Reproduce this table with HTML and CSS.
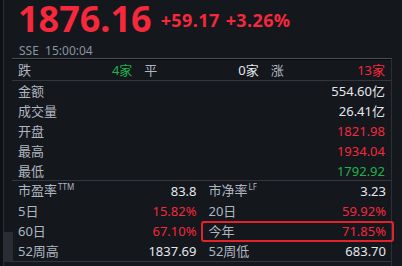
FILE: index.html
```html
<!DOCTYPE html>
<html lang="zh-CN">
<head>
<meta charset="utf-8">
<title>1876.16</title>
<link rel="stylesheet" href="styles.css">
</head>
<body>
<div class="app">
  <div class="gutter"><div class="tab"></div></div>
  <div class="main">
    <div class="header">
      <div class="quote">
        <span class="price">1876.16</span>
        <span class="chg">+59.17</span>
        <span class="chg pct">+3.26%</span>
      </div>
      <div class="meta">SSE&nbsp;&nbsp;15:00:04</div>
    </div>
    <div class="panel">
      <div class="breadth">
        <div class="cell"><span class="lbl">跌</span><span class="val down">4家</span></div>
        <div class="cell"><span class="lbl">平</span><span class="val">0家</span></div>
        <div class="cell"><span class="lbl">涨</span><span class="val up">13家</span></div>
      </div>
      <div class="list">
        <div class="row"><span class="lbl">金额</span><span class="val">554.60亿</span></div>
        <div class="row"><span class="lbl">成交量</span><span class="val">26.41亿</span></div>
        <div class="row"><span class="lbl">开盘</span><span class="val up">1821.98</span></div>
        <div class="row"><span class="lbl">最高</span><span class="val up">1934.04</span></div>
        <div class="row"><span class="lbl">最低</span><span class="val down">1792.92</span></div>
      </div>
      <div class="grid">
        <div class="row"><span class="lbl">市盈率<sup>TTM</sup></span><span class="val">83.8</span></div>
        <div class="row"><span class="lbl">市净率<sup>LF</sup></span><span class="val">3.23</span></div>
        <div class="row"><span class="lbl">5日</span><span class="val up">15.82%</span></div>
        <div class="row"><span class="lbl">20日</span><span class="val up">59.92%</span></div>
        <div class="row"><span class="lbl">60日</span><span class="val up">67.10%</span></div>
        <div class="row hl"><span class="lbl">今年</span><span class="val up">71.85%</span></div>
        <div class="row"><span class="lbl">52周高</span><span class="val">1837.69</span></div>
        <div class="row"><span class="lbl">52周低</span><span class="val">683.70</span></div>
      </div>
    </div>
  </div>
</div>
</body>
</html>
```

FILE: styles.css
```css
* { box-sizing: border-box; }
html, body {
  margin: 0;
  padding: 0;
  background: #14171c;
  width: 402px;
  height: 266px;
  overflow: hidden;
}
body {
  font-family: "Noto Sans", "Noto Sans CJK SC", sans-serif;
  color: #e4e8ee;
}
.app {
  display: flex;
  height: 266px;
}
.gutter {
  width: 4px;
  background: #0e1014;
  border-right: 1px solid #2a2e34;
  display: flex;
  flex-direction: column;
  justify-content: flex-end;
  padding-bottom: 4px;
}
.tab {
  height: 30px;
  width: 10px;
  background: #2a2d33;
  margin-left: 3px;
}
.main {
  flex: 1;
  display: flex;
  flex-direction: column;
  padding-left: 8px;
}
.header {
  height: 58px;
  padding-left: 6px;
}
.quote {
  display: flex;
  align-items: flex-start;
  height: 43px;
  overflow: visible;
}
.price {
  font-size: 36px;
  font-weight: 700;
  line-height: 38px;
  color: #f5283c;
}
.chg {
  font-size: 18px;
  font-weight: 700;
  line-height: 20px;
  color: #f5283c;
  margin-top: 10px;
  margin-left: 9px;
  letter-spacing: 0.4px;
}
.chg.pct { margin-left: 6px; }
.meta {
  font-size: 12px;
  line-height: 15px;
  color: #8a94a1;
  margin-left: 1px;
}
.panel {
  width: 380px;
  border-top: 1px solid #4a4f57;
  border-right: 1px solid #2c3036;
  flex: 1;
  display: flex;
  flex-direction: column;
  font-size: 13px;
}
.panel::before {
  content: "";
  display: block;
  height: 1px;
  background: #08090b;
}
.lbl { color: #aeb6c1; }
.val { color: #e4e8ee; }
.up { color: #f5283c; }
.down { color: #1fb34e; }
sup {
  font-size: 8px;
  vertical-align: 0;
  position: relative;
  top: -5px;
  margin-left: 1px;
  color: #aeb6c1;
}
.breadth {
  display: grid;
  grid-template-columns: repeat(3, 1fr);
  height: 21px;
  border-bottom: 1px solid #33373d;
}
.cell, .row {
  display: flex;
  justify-content: space-between;
  align-items: center;
  padding: 0 6px 0 6px;
  line-height: 20px;
}
.list {
  display: flex;
  flex-direction: column;
  border-bottom: 1px solid #33373d;
}
.list .row { height: 20px; }
.list .row:last-child { height: 19px; }
.grid {
  display: grid;
  grid-template-columns: 1fr 1fr;
  grid-auto-rows: 20px;
  border-bottom: 1px solid #33373d;
}
.grid .row:nth-child(odd) { padding-right: 5px; }
.grid .row:nth-child(even) { padding-left: 7px; padding-right: 5px; }
.hl { position: relative; }
.hl::after {
  content: "";
  position: absolute;
  left: -1px;
  right: -3px;
  top: 0;
  bottom: -1px;
  border: 2px solid #e5212c;
  border-radius: 3px;
}
```
